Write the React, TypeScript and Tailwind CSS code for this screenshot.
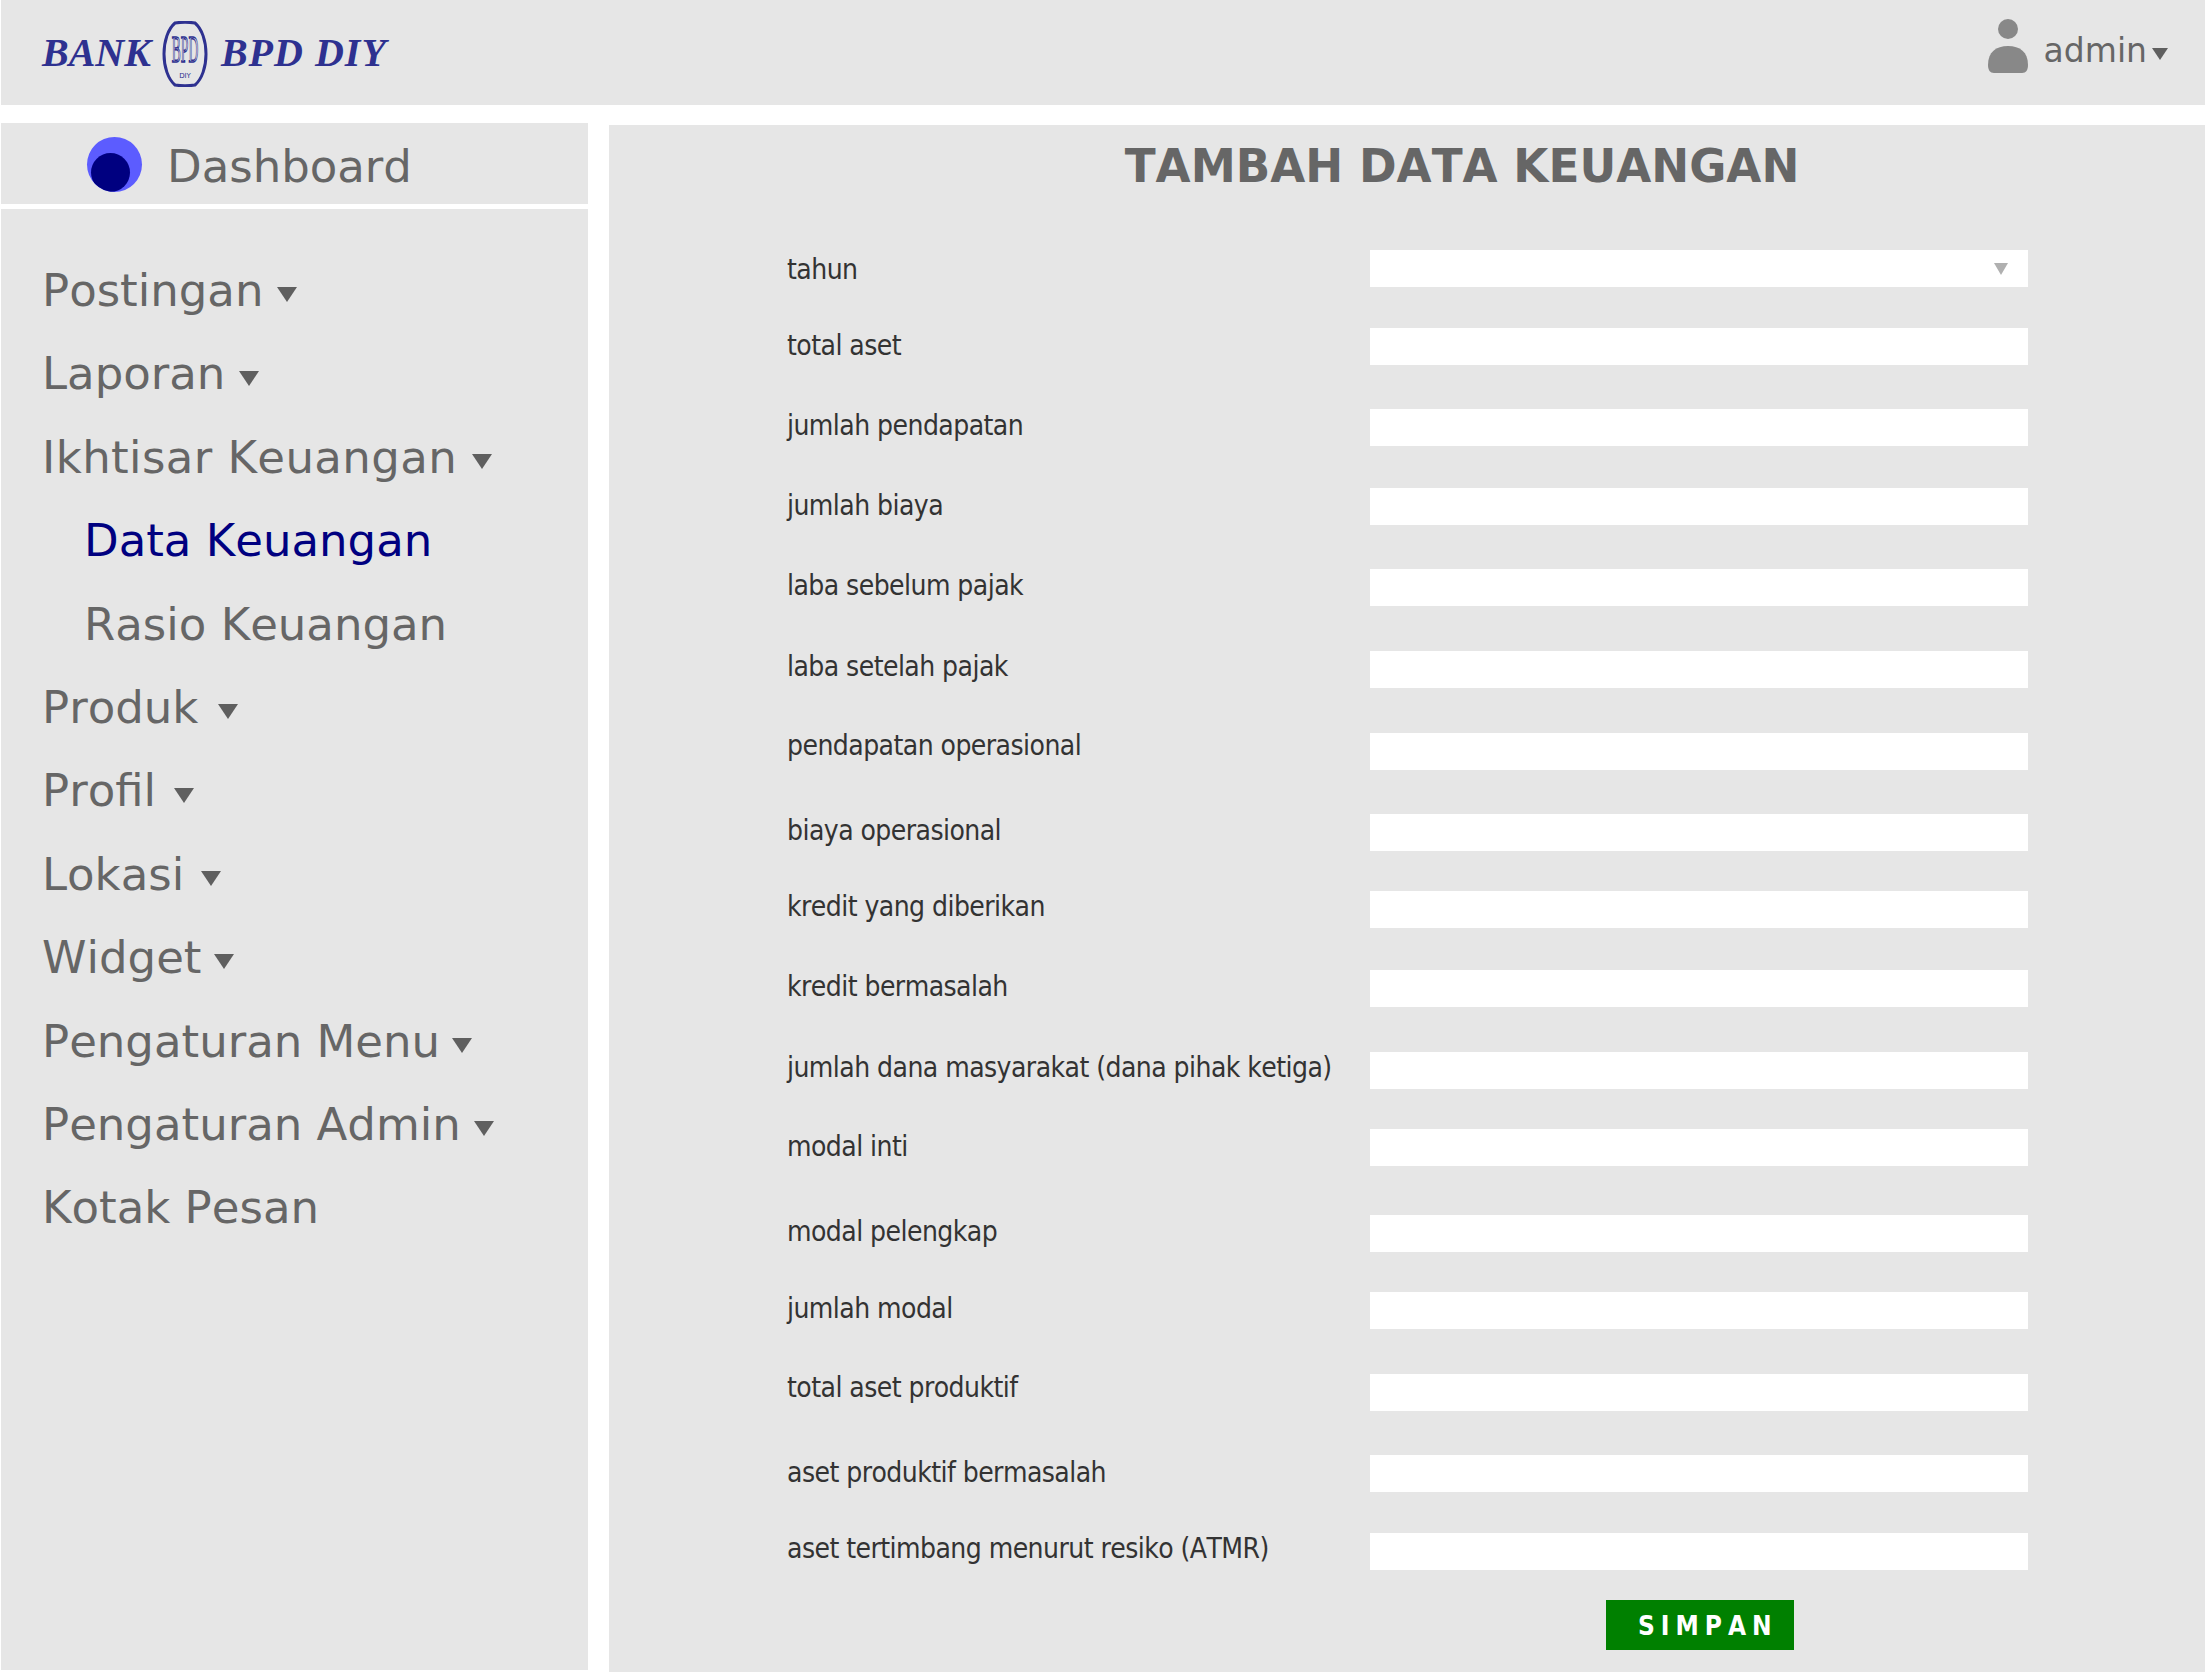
import React from 'react';

const menu = [
  { label: 'Postingan', caret: 'ml-[14px]' },
  { label: 'Laporan', caret: 'ml-[14px]' },
  { label: 'Ikhtisar Keuangan', caret: 'ml-[15px]', text: 'tracking-[0.4px]' },
  { label: 'Data Keuangan', sub: true, active: true },
  { label: 'Rasio Keuangan', sub: true },
  { label: 'Produk', caret: 'ml-[20px]' },
  { label: 'Profil', caret: 'ml-[18px]' },
  { label: 'Lokasi', caret: 'ml-[17px]' },
  { label: 'Widget', caret: 'ml-[13px]' },
  { label: 'Pengaturan Menu', caret: 'ml-[12px]' },
  { label: 'Pengaturan Admin', caret: 'ml-[13px]' },
  { label: 'Kotak Pesan' },
];

// row heights and label offsets follow the uneven spacing of the form
const fields = [
  { label: 'total aset', h: 'h-[81px]', pad: 'mt-[1px]' },
  { label: 'jumlah pendapatan', h: 'h-[79px]', pad: 'mt-0' },
  { label: 'jumlah biaya', h: 'h-[81px]', pad: 'mt-[1px]' },
  { label: 'laba sebelum pajak', h: 'h-[82px]', pad: 'mt-0' },
  { label: 'laba setelah pajak', h: 'h-[82px]', pad: 'mt-[-1px]' },
  { label: 'pendapatan operasional', h: 'h-[81px]', pad: 'mt-[-4px]' },
  { label: 'biaya operasional', h: 'h-[77px]', pad: 'mt-0' },
  { label: 'kredit yang diberikan', h: 'h-[79px]', pad: 'mt-[-1px]' },
  { label: 'kredit bermasalah', h: 'h-[82px]', pad: 'mt-0' },
  { label: 'jumlah dana masyarakat (dana pihak ketiga)', h: 'h-[77px]', pad: 'mt-[-1px]' },
  { label: 'modal inti', h: 'h-[86px]', pad: 'mt-[1px]' },
  { label: 'modal pelengkap', h: 'h-[77px]', pad: 'mt-0' },
  { label: 'jumlah modal', h: 'h-[82px]', pad: 'mt-0' },
  { label: 'total aset produktif', h: 'h-[81px]', pad: 'mt-[-3px]' },
  { label: 'aset produktif bermasalah', h: 'h-[78px]', pad: 'mt-[1px]' },
  { label: 'aset tertimbang menurut resiko (ATMR)', h: 'h-[67px]', pad: 'mt-[-1px]' },
];

const Caret = ({ className }: { className: string }) => (
  <span className={`inline-block h-0 w-0 border-x-transparent border-t-[#5f5f5f] ${className}`} />
);

const Logo = () => (
  <div className="flex items-center font-['Liberation_Serif',serif] text-[40px] font-bold italic text-[#2e3190]">
    <span>BANK</span>
    <svg width="46" height="66" viewBox="0 0 46 66" className="ml-[11px] mr-[13px] mt-[2px]" fill="none" stroke="#2e3190">
      <path d="M13 2C6 8 2 20 2 33s4 25 11 31c6 1 14 1 20 0c7-6 11-18 11-31S40 8 33 2c-6-1-14-1-20 0z" strokeWidth="3" />
      <text
        transform="translate(23 41) scale(0.9 2.6)"
        textAnchor="middle"
        fontFamily="'Liberation Serif',serif"
        fontSize="15"
        fontStyle="normal"
        fontWeight="400"
        strokeWidth="1.1"
        vectorEffect="non-scaling-stroke"
      >
        BPD
      </text>
      <text x="23" y="57" textAnchor="middle" fontFamily="'DejaVu Sans',sans-serif" fontSize="7" fontStyle="normal" fontWeight="400" fill="#2e3190" stroke="none">
        DIY
      </text>
    </svg>
    <span className="tracking-[1px]">BPD DIY</span>
  </div>
);

export default function App() {
  return (
    <div className="flex h-[1672px] w-[2205px] flex-col bg-white pl-px font-['DejaVu_Sans',sans-serif] text-[#666666] [font-kerning:none]">
      <header className="flex h-[105px] shrink-0 items-center justify-between bg-[#e6e6e6] pl-[41px] pr-[37px]">
        <Logo />
        <div className="flex items-center text-[33px]">
          <svg width="40" height="54" viewBox="0 0 40 54" fill="#888888" className="mb-[14px] mr-[16px]">
            <circle cx="20" cy="10" r="10" />
            <path d="M0 46C0 33 8 27 20 27s20 6 20 19c0 5-2 8-6 8H6c-4 0-6-3-6-8z" />
          </svg>
          <span className="mb-[3px]">admin</span>
          <Caret className="ml-[5px] mt-[2px] border-x-[8px] border-t-[12px]" />
        </div>
      </header>

      <div className="mt-[18px] flex min-h-0 flex-1">
        <aside className="flex w-[587px] shrink-0 flex-col">
          <div className="flex h-[81px] shrink-0 items-center bg-[#e6e6e6] pl-[86px] text-[45px]">
            <span className="relative mr-[25px] mt-[2px] h-[55px] w-[55px] overflow-hidden rounded-full bg-[#5c5cff]">
              <span className="absolute left-[4px] top-[16px] h-[39px] w-[39px] rounded-full bg-[#000080]" />
            </span>
            <span className="mt-[6px]">Dashboard</span>
          </div>
          <nav className="mb-[2px] mt-[5px] flex-1 bg-[#e6e6e6] pl-[41px] pt-[40px] text-[45px] leading-[83.4px]">
            {menu.map((item) => (
              <div
                key={item.label}
                className={`flex items-center ${item.sub ? 'pl-[42px]' : ''} ${item.active ? 'text-[#000080]' : ''}`}
              >
                <span className={item.text}>{item.label}</span>
                {item.caret && <Caret className={`${item.caret} mt-[8px] border-x-[10px] border-t-[15px]`} />}
              </div>
            ))}
          </nav>
        </aside>

        <main className="ml-[21px] mt-[2px] flex-1 bg-[#e6e6e6]">
          <h1 className="mt-[14px] pl-[110px] text-center text-[45.3px] font-bold leading-[56px] text-[#666666]">
            TAMBAH DATA KEUANGAN
          </h1>
          <form className="mt-[55px] pl-[178px] text-[28px] text-[#333333] [font-stretch:condensed]">
            <div className="flex h-[78px] items-start">
              <label className="w-[583px] leading-[40px] tracking-[-0.55px]">tahun</label>
              <div className="flex h-[37px] w-[658px] items-center justify-end bg-white pr-[20px]">
                <span className="h-0 w-0 border-x-[7px] border-t-[12px] border-x-transparent border-t-[#b0b0b0]" />
              </div>
            </div>
            {fields.map((f) => (
              <div key={f.label} className={`flex items-start ${f.h}`}>
                <label className={`w-[583px] leading-[34px] tracking-[-0.55px] ${f.pad}`}>{f.label}</label>
                <input className="h-[37px] w-[658px] bg-white" />
              </div>
            ))}
            <div className="flex w-[1240px] justify-end pr-[233px]">
              <button
                type="button"
                className="h-[50px] w-[188px] bg-[#008000] pl-[32px] pt-[3px] text-left text-[26px] font-bold tracking-[6px] text-white"
              >
                SIMPAN
              </button>
            </div>
          </form>
        </main>
      </div>
    </div>
  );
}
